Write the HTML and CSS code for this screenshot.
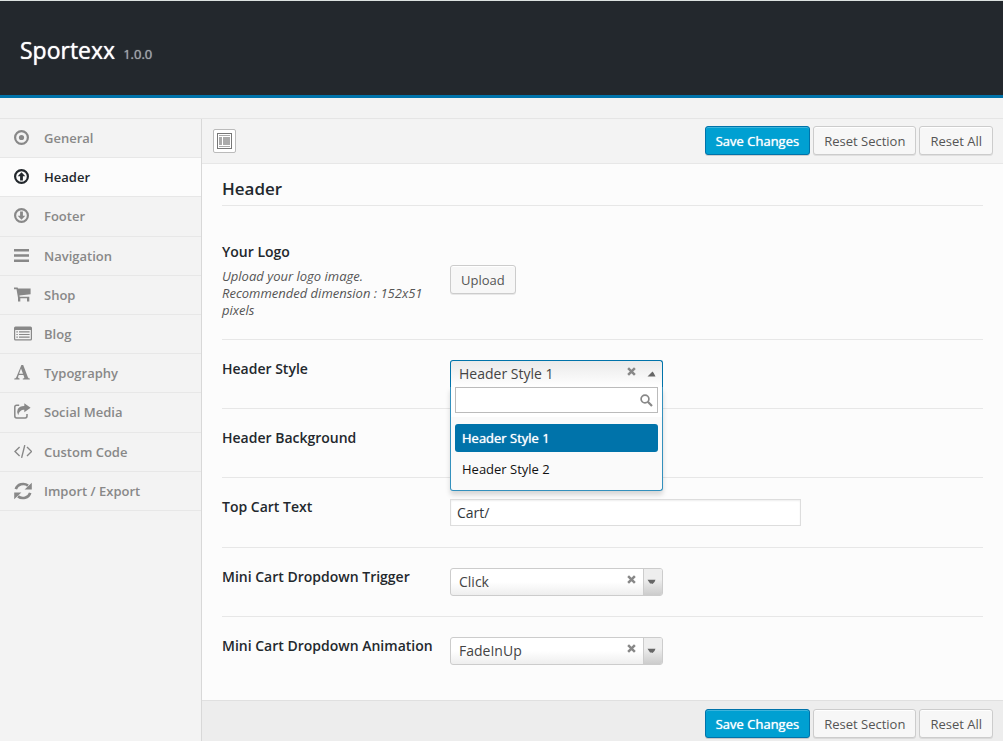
FILE: index.html
```html
<!DOCTYPE html>
<html lang="en">
<head>
<meta charset="utf-8">
<meta name="viewport" content="width=device-width, initial-scale=1">
<title>Sportexx Options</title>
<link rel="stylesheet" href="styles.css">
</head>
<body>
<div class="panel">
  <header class="masthead">
    <h1 class="brand">Sportexx</h1>
    <span class="version">1.0.0</span>
  </header>

  <div class="body">
    <nav class="sidebar" aria-label="Sections">
      <ul class="menu">
        <li><a class="menu-link" href="#general"><svg class="icon" viewBox="0 0 18 18"><circle cx="7.5" cy="8.5" r="6.4" fill="none" stroke="currentColor" stroke-width="2.2"/><circle cx="7.5" cy="8.5" r="2.6"/></svg>General</a></li>
        <li><a class="menu-link active" href="#header" aria-current="page"><svg class="icon" viewBox="0 0 18 18"><circle cx="7.5" cy="8.5" r="6.4" fill="none" stroke="currentColor" stroke-width="2.2"/><path d="M7.5 4.3 11.3 8.3H8.9V12.5H6.1V8.3H3.7Z"/></svg>Header</a></li>
        <li><a class="menu-link" href="#footer"><svg class="icon" viewBox="0 0 18 18"><circle cx="7.5" cy="8.5" r="6.4" fill="none" stroke="currentColor" stroke-width="2.2"/><path d="M7.5 12.7 3.7 8.7H6.1V4.5H8.9V8.7H11.3Z"/></svg>Footer</a></li>
        <li><a class="menu-link" href="#navigation"><svg class="icon" viewBox="0 0 18 18"><path d="M0 2h15v2.6H0zM0 7.2h15v2.6H0zM0 12.4h15V15H0z"/></svg>Navigation</a></li>
        <li><a class="menu-link" href="#shop"><svg class="icon" viewBox="0 0 18 18"><path d="M0 1.6H3.6L4.1 2.6H16.6V8.3L5.4 9.6 5.7 10.7H15.3V15.6H13V12.3H6.3V15.6H4V11.8L2.5 3.2H0Z"/></svg>Shop</a></li>
        <li><a class="menu-link" href="#blog"><svg class="icon" viewBox="0 0 18 18"><path fill-rule="evenodd" d="M1.5 1.5H16.5Q18 1.5 18 3V14Q18 15.5 16.5 15.5H1.5Q0 15.5 0 14V3Q0 1.5 1.5 1.5ZM1.2 5.1V13.8Q1.2 14.3 1.7 14.3H16.3Q16.8 14.3 16.8 13.8V5.1Z"/><path d="M2.4 6.3h1.4v1.2H2.4zM5 6.3h10.6v1.2H5zM2.4 8.9h1.4v1.2H2.4zM5 8.9h10.6v1.2H5zM2.4 11.5h1.4v1.2H2.4zM5 11.5h10.6v1.2H5z"/></svg>Blog</a></li>
        <li><a class="menu-link" href="#typography"><svg class="icon" viewBox="0 0 18 18"><path fill-rule="evenodd" d="M7.4 1H9.2L13.9 13.2Q14.3 14.4 15.8 14.6V15.6H8.8V14.6Q10.7 14.5 10.3 13.3L9.4 10.9H4.8L4.1 12.8Q3.6 14.4 5.6 14.6V15.6H0.3V14.6Q1.8 14.4 2.4 12.9ZM7 4.4 5.1 9.8H9Z"/></svg>Typography</a></li>
        <li><a class="menu-link" href="#social"><svg class="icon" viewBox="0 0 18 18"><path d="M5.2 2.2H2.6Q.8 2.2 .8 4V13Q.8 14.9 2.6 14.9H11.2Q13 14.9 13 13V11" fill="none" stroke="currentColor" stroke-width="1.5"/><path d="M10.3 0.3 16.6 4.7 10.3 9.2V6.7Q5.5 6.5 4.2 12.2 2.2 9.2 3.8 6 5.7 2.8 10.3 2.9Z"/></svg>Social Media</a></li>
        <li><a class="menu-link" href="#code"><svg class="icon" viewBox="0 0 18 18"><path d="M5.6 4 1 8.5 5.6 13M13 4l4.6 4.5L13 13M10.8 2.2 7.6 14.8" fill="none" stroke="currentColor" stroke-width="1.4"/></svg>Custom Code</a></li>
        <li><a class="menu-link" href="#import"><svg class="icon" viewBox="0 0 18 18"><path d="M1.8 7.2A7.6 7 0 0 1 14 3.6M16.2 10.8A7.6 7 0 0 1 4 14.4" fill="none" stroke="currentColor" stroke-width="2.6"/><path d="M17.8 0.8V7.6H10.6ZM0.2 17.2V10.4H7.4Z"/></svg>Import / Export</a></li>
      </ul>
    </nav>

    <main class="main">
      <div class="bar">
        <button class="expand" type="button" aria-label="Expand options"><svg class="expand-icon" viewBox="0 0 15 16"><rect x=".5" y=".5" width="14" height="15" fill="#fff" stroke="#777"/><path d="M2 2h11v1H2zM2 13h11v1H2zM2 4h3v8H2zM6 4h7v8H6z" fill="#aaa"/></svg></button>
        <div class="actions">
          <button class="btn primary" type="button">Save Changes</button>
          <button class="btn" type="button">Reset Section</button>
          <button class="btn" type="button">Reset All</button>
        </div>
      </div>

      <form class="content">
        <h2 class="heading">Header</h2>
        <div class="fields">
          <div class="row">
            <div class="label">
              <label class="title" for="logo">Your Logo</label>
              <p class="hint">Upload your logo image. Recommended dimension : 152x51 pixels</p>
            </div>
            <div class="control middle"><button class="btn" id="logo" type="button">Upload</button></div>
          </div>

          <div class="row">
            <div class="label"><label class="title" for="style">Header Style</label></div>
            <div class="control">
              <div class="picker open">
                <select class="picker-select" id="style"><option>Header Style 1</option><option>Header Style 2</option></select>
                <button class="clear" type="button" aria-label="Clear header style"><svg class="clear-icon" viewBox="0 0 8 8"><path d="M1 1l6 6M7 1 1 7" stroke="#888" stroke-width="2.2"/></svg></button>
                <span class="arrow"><svg class="arrow-icon" viewBox="0 0 8 6"><path d="M0 5.5 5 .5 6.2 2 8 5.5Z" fill="#666"/></svg></span>
                <div class="popup">
                  <div class="search">
                    <input class="search-input" type="text" aria-label="Search styles">
                    <svg class="search-icon" viewBox="0 0 13 13"><circle cx="5" cy="5" r="3.9" fill="none" stroke="#888" stroke-width="1.7"/><path d="M7.8 7.8 12 12" stroke="#888" stroke-width="2.2"/></svg>
                  </div>
                  <ul class="options" role="listbox" aria-label="Header styles">
                    <li class="option selected" role="option" aria-selected="true">Header Style 1</li>
                    <li class="option" role="option" aria-selected="false">Header Style 2</li>
                  </ul>
                </div>
              </div>
            </div>
          </div>

          <div class="row">
            <div class="label"><span class="title">Header Background</span></div>
            <div class="control"></div>
          </div>

          <div class="row">
            <div class="label"><label class="title" for="cart">Top Cart Text</label></div>
            <div class="control"><input class="text" id="cart" type="text" value="Cart/"></div>
          </div>

          <div class="row">
            <div class="label"><label class="title" for="trigger">Mini Cart Dropdown Trigger</label></div>
            <div class="control">
              <div class="picker">
                <select class="picker-select" id="trigger"><option>Click</option></select>
                <button class="clear" type="button" aria-label="Clear trigger"><svg class="clear-icon" viewBox="0 0 8 8"><path d="M1 1l6 6M7 1 1 7" stroke="#888" stroke-width="2.2"/></svg></button>
                <span class="arrow"><svg class="arrow-icon" viewBox="0 0 8 6"><path d="M0 .8H8L7 3 5 5 4 4.4 2.6 4.4Z" fill="#666"/></svg></span>
              </div>
            </div>
          </div>

          <div class="row">
            <div class="label"><label class="title" for="animation">Mini Cart Dropdown Animation</label></div>
            <div class="control">
              <div class="picker">
                <select class="picker-select" id="animation"><option>FadeInUp</option></select>
                <button class="clear" type="button" aria-label="Clear animation"><svg class="clear-icon" viewBox="0 0 8 8"><path d="M1 1l6 6M7 1 1 7" stroke="#888" stroke-width="2.2"/></svg></button>
                <span class="arrow"><svg class="arrow-icon" viewBox="0 0 8 6"><path d="M0 .8H8L7 3 5 5 4 4.4 2.6 4.4Z" fill="#666"/></svg></span>
              </div>
            </div>
          </div>
        </div>
      </form>

      <div class="bar bottom">
        <div class="actions">
          <button class="btn primary" type="button">Save Changes</button>
          <button class="btn" type="button">Reset Section</button>
          <button class="btn" type="button">Reset All</button>
        </div>
      </div>
    </main>
  </div>
</div>
</body>
</html>
```
FILE: styles.css
```css
* { box-sizing: border-box; }

body {
  margin: 0;
  background: #f3f3f3;
  color: #23282d;
  font-family: "Open Sans", sans-serif;
  font-size: 13px;
  line-height: 1.4;
}

button, input, select { font: inherit; margin: 0; }

.panel {
  display: flex;
  flex-direction: column;
  min-height: 100vh;
  border-top: 1px solid #dce2e0;
}

.masthead {
  display: flex;
  align-items: baseline;
  gap: 8px;
  padding: 32px 20px 28px;
  background: #23282d;
  border-bottom: 3px solid #0073aa;
}

/* Light text on dark fills gets a little extra weight */
.brand,
.version,
.btn.primary,
.option.selected { text-shadow: 0 0 1px currentColor; }

.brand {
  margin: 0;
  color: #fff;
  font-size: 23px;
  font-weight: 400;
  line-height: 34px;
}

.version { color: #a0a5aa; font-size: 13px; }

.body {
  display: flex;
  flex: 1;
  margin-top: 20px;
  border-top: 1px solid #e5e5e5;
}

/* Sidebar */
.sidebar { flex: 0 0 201px; }
.menu { margin: 0; padding: 0; list-style: none; }

.menu-link {
  display: flex;
  align-items: center;
  gap: 12px;
  padding: 10px 14px;
  border-bottom: 1px solid #e7e7e7;
  color: #888;
  font-weight: 600;
  text-decoration: none;
}

.menu-link.active { background: #fcfcfc; color: #23282d; }
.icon { width: 18px; height: 18px; fill: currentColor; }

/* Main column */
.main {
  display: flex;
  flex: 1;
  flex-direction: column;
  min-width: 0;
  background: #fcfcfc;
  border-left: 1px solid #d8d8d8;
}

.bar {
  display: flex;
  align-items: center;
  padding: 7px 10px 8px 11px;
  background: #f3f3f3;
  border-bottom: 1px solid #e7e7e7;
}

.bar.bottom {
  flex: 1;
  align-items: flex-start;
  padding: 8px 10px 3px;
  background: #ededed;
  border-top: 1px solid #e0e0e0;
  border-bottom: 0;
}

.actions { display: flex; gap: 3px; margin-left: auto; }

.btn {
  height: 29px;
  padding: 1px 10px 0;
  background: #f7f7f7;
  border: 1px solid #ccc;
  border-radius: 3px;
  box-shadow: inset 0 1px 0 #fff, 0 1px 0 rgba(0, 0, 0, .08);
  color: #555;
}

.btn.primary {
  background: #00a0d2;
  border-color: #0073aa;
  box-shadow: inset 0 1px 0 rgba(120, 200, 230, .5), 0 1px 0 rgba(0, 0, 0, .15);
  color: #fff;
}

.expand {
  display: flex;
  align-items: center;
  justify-content: center;
  width: 23px;
  height: 24px;
  padding: 0;
  background: #fff;
  border: 1px solid #bbb;
  border-radius: 2px;
}

.expand-icon { width: 15px; height: 16px; }

/* Form */
.content { padding: 10px 20px 15px; }

.heading {
  margin: 0 0 17px;
  padding: 3px 0 4px;
  border-bottom: 1px solid #e7e7e7;
  font-size: 17px;
  font-weight: 600;
  line-height: 24px;
}

.row {
  display: flex;
  gap: 16px;
  padding: 20px 0;
  border-bottom: 1px solid #e7e7e7;
}

.row:last-child { border-bottom: 0; }
.label { flex: 0 0 212px; }
.title { display: block; font-size: 14px; font-weight: 600; line-height: 18px; }

.hint {
  margin: 7px 0 0;
  color: #555;
  font-style: italic;
  line-height: 17px;
}

.control { flex: 1; min-width: 0; min-height: 28px; }
.control.middle { display: flex; align-items: center; padding-bottom: 3px; }

.text {
  display: block;
  width: 100%;
  max-width: 351px;
  height: 27px;
  margin: 1px 0;
  padding: 0 6px;
  background: #fff;
  border: 1px solid #ddd;
  box-shadow: inset 0 1px 2px rgba(0, 0, 0, .07);
  color: #32373c;
  font-size: 14px;
}

.picker { position: relative; max-width: 213px; }

.picker-select {
  display: block;
  width: 100%;
  height: 28px;
  padding: 0 40px 0 8px;
  appearance: none;
  background: linear-gradient(#fff 50%, #eee);
  border: 1px solid #ccc;
  border-radius: 3px;
  color: #444;
  font-size: 14px;
}

.clear {
  position: absolute;
  top: 7px;
  right: 27px;
  display: flex;
  padding: 0;
  background: none;
  border: 0;
}

.clear-icon { width: 9px; height: 9px; }

.arrow {
  position: absolute;
  top: 1px;
  right: 1px;
  bottom: 1px;
  display: flex;
  align-items: center;
  justify-content: center;
  width: 19px;
  background: linear-gradient(#eee 40%, #ccc);
  border-left: 1px solid #ccc;
  border-radius: 0 2px 2px 0;
  pointer-events: none;
}

.arrow-icon { width: 9px; height: 6px; margin-right: 3px; }

.open .picker-select {
  background: linear-gradient(#eaeaea, #fff);
  border-color: #0073aa;
  border-bottom-color: #fff;
  border-radius: 3px 3px 0 0;
}

.open .arrow { background: none; border-left: 0; }

.popup {
  position: absolute;
  z-index: 1;
  top: 27px;
  left: 0;
  right: 0;
  padding: 0 4px 4px;
  background: linear-gradient(#fff 30px, #fafafa 30px);
  border: 1px solid #3390bd;
  border-top: 0;
  border-radius: 0 0 3px 3px;
  box-shadow: 0 4px 5px rgba(0, 0, 0, .15);
}

.search { position: relative; }

.search-input {
  display: block;
  width: 100%;
  height: 26px;
  padding: 0 24px 0 6px;
  background: #fff;
  border: 1px solid #bbb;
}

.search-icon {
  position: absolute;
  top: 7px;
  right: 5px;
  width: 13px;
  height: 13px;
}

.options { margin: 11px 0 0; padding: 0; list-style: none; }

.option {
  margin-bottom: 3px;
  padding: 5px 7px;
  border-radius: 3px;
  color: #111;
  line-height: 18px;
}

.option.selected { background: #0073aa; color: #fff; }
```
